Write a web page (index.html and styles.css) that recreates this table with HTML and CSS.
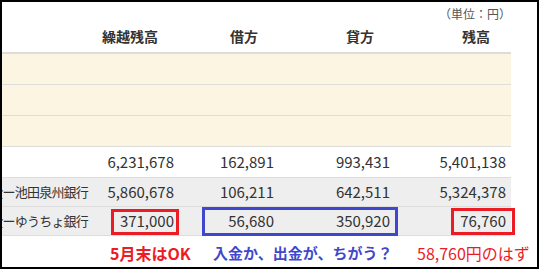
FILE: index.html
```html
<!DOCTYPE html>
<html lang="ja">
<head>
<meta charset="utf-8">
<link rel="stylesheet" href="styles.css">
</head>
<body>
<div class="frame">
  <div class="unit">（単位：円）</div>
  <table class="ledger">
    <colgroup>
      <col class="c-label"><col class="c1"><col class="c2"><col class="c3"><col class="c4">
    </colgroup>
    <thead>
      <tr class="head">
        <th></th><th>繰越残高</th><th>借方</th><th>貸方</th><th>残高</th>
      </tr>
    </thead>
    <tbody>
      <tr class="yellow"><td></td><td></td><td></td><td></td><td></td></tr>
      <tr class="yellow"><td></td><td></td><td></td><td></td><td></td></tr>
      <tr class="yellow"><td></td><td></td><td></td><td></td><td></td></tr>
      <tr class="white"><td></td><td>6,231,678</td><td>162,891</td><td>993,431</td><td>5,401,138</td></tr>
      <tr class="gray short"><td><div class="label"><span>普通預金ー池田泉州銀行</span></div></td><td>5,860,678</td><td>106,211</td><td>642,511</td><td>5,324,378</td></tr>
      <tr class="gray short"><td><div class="label"><span>普通預金ーゆうちょ銀行</span></div></td><td>371,000</td><td>56,680</td><td>350,920</td><td>76,760</td></tr>
    </tbody>
  </table>
  <div class="notes">
    <span class="note red bold">5月末はOK</span>
    <span class="note blue bold">入金か、出金が、ちがう？</span>
    <span class="note red">58,760円のはず</span>
  </div>
  <div class="mark mark-red1"></div>
  <div class="mark mark-blue"></div>
  <div class="mark mark-red2"></div>
</div>
</body>
</html>
```
FILE: styles.css
```css
html, body {
  margin: 0;
  padding: 0;
  background: #ffffff;
}
body {
  font-family: "Noto Sans CJK JP", "Noto Sans", sans-serif;
  color: #333333;
}
.frame {
  position: relative;
  width: 535px;
  height: 265px;
  border: 2px solid #000000;
  overflow: hidden;
  background: #ffffff;
}
.unit {
  width: 509px;
  height: 23px;
  box-sizing: border-box;
  padding: 1px 0 0 0;
  text-align: right;
  font-size: 12px;
  line-height: 22px;
  color: #555555;
}
.ledger {
  width: 509px;
  table-layout: fixed;
  border-collapse: collapse;
  border-spacing: 0;
}
.c-label { width: 93px; }
.c1 { width: 84px; }
.c2 { width: 100px; }
.c3 { width: 116px; }
.c4 { width: 116px; }
.head th {
  height: 27px;
  padding: 0 21px 0 0;
  vertical-align: top;
  text-align: right;
  font-size: 14px;
  line-height: 23px;
  font-weight: bold;
  color: #333333;
  border-bottom: 2px solid #dcdcdc;
}
.ledger td {
  height: 30px;
  padding: 0 5px 0 0;
  text-align: right;
  font-size: 15px;
  line-height: 20px;
  color: #333333;
  border-bottom: 1px solid #dddddd;
  white-space: nowrap;
}
.ledger tr.short td {
  height: 28px;
}
.yellow td { background: #fcf5e1; }
.white td { background: #ffffff; }
.gray td { background: #eeeeee; }
.label {
  display: flex;
  justify-content: flex-end;
  overflow: hidden;
  padding-right: 2px;
  font-size: 13px;
  letter-spacing: -0.8px;
}
.label span {
  flex: none;
}
.notes {
  display: grid;
  grid-template-columns: 108px 103px 204px auto;
  height: 31px;
  align-items: center;
  font-size: 15px;
  line-height: 20px;
  padding-top: 1px;
}
.note:first-child { grid-column: 2; }
.bold { font-weight: bold; }
.red { color: #ec1c24; }
.blue { color: #3f48cc; }
.note.red { font-size: 16px; }
.mark {
  position: absolute;
  box-sizing: border-box;
  border: 3px solid;
}
.mark-red1 {
  left: 109px; top: 207px; width: 68px; height: 26px;
  border-color: #ec1c24;
}
.mark-blue {
  left: 200px; top: 205px; width: 196px; height: 29px;
  border-color: #3f48cc;
}
.mark-red2 {
  left: 449px; top: 206px; width: 64px; height: 27px;
  border-color: #ec1c24;
}
```
